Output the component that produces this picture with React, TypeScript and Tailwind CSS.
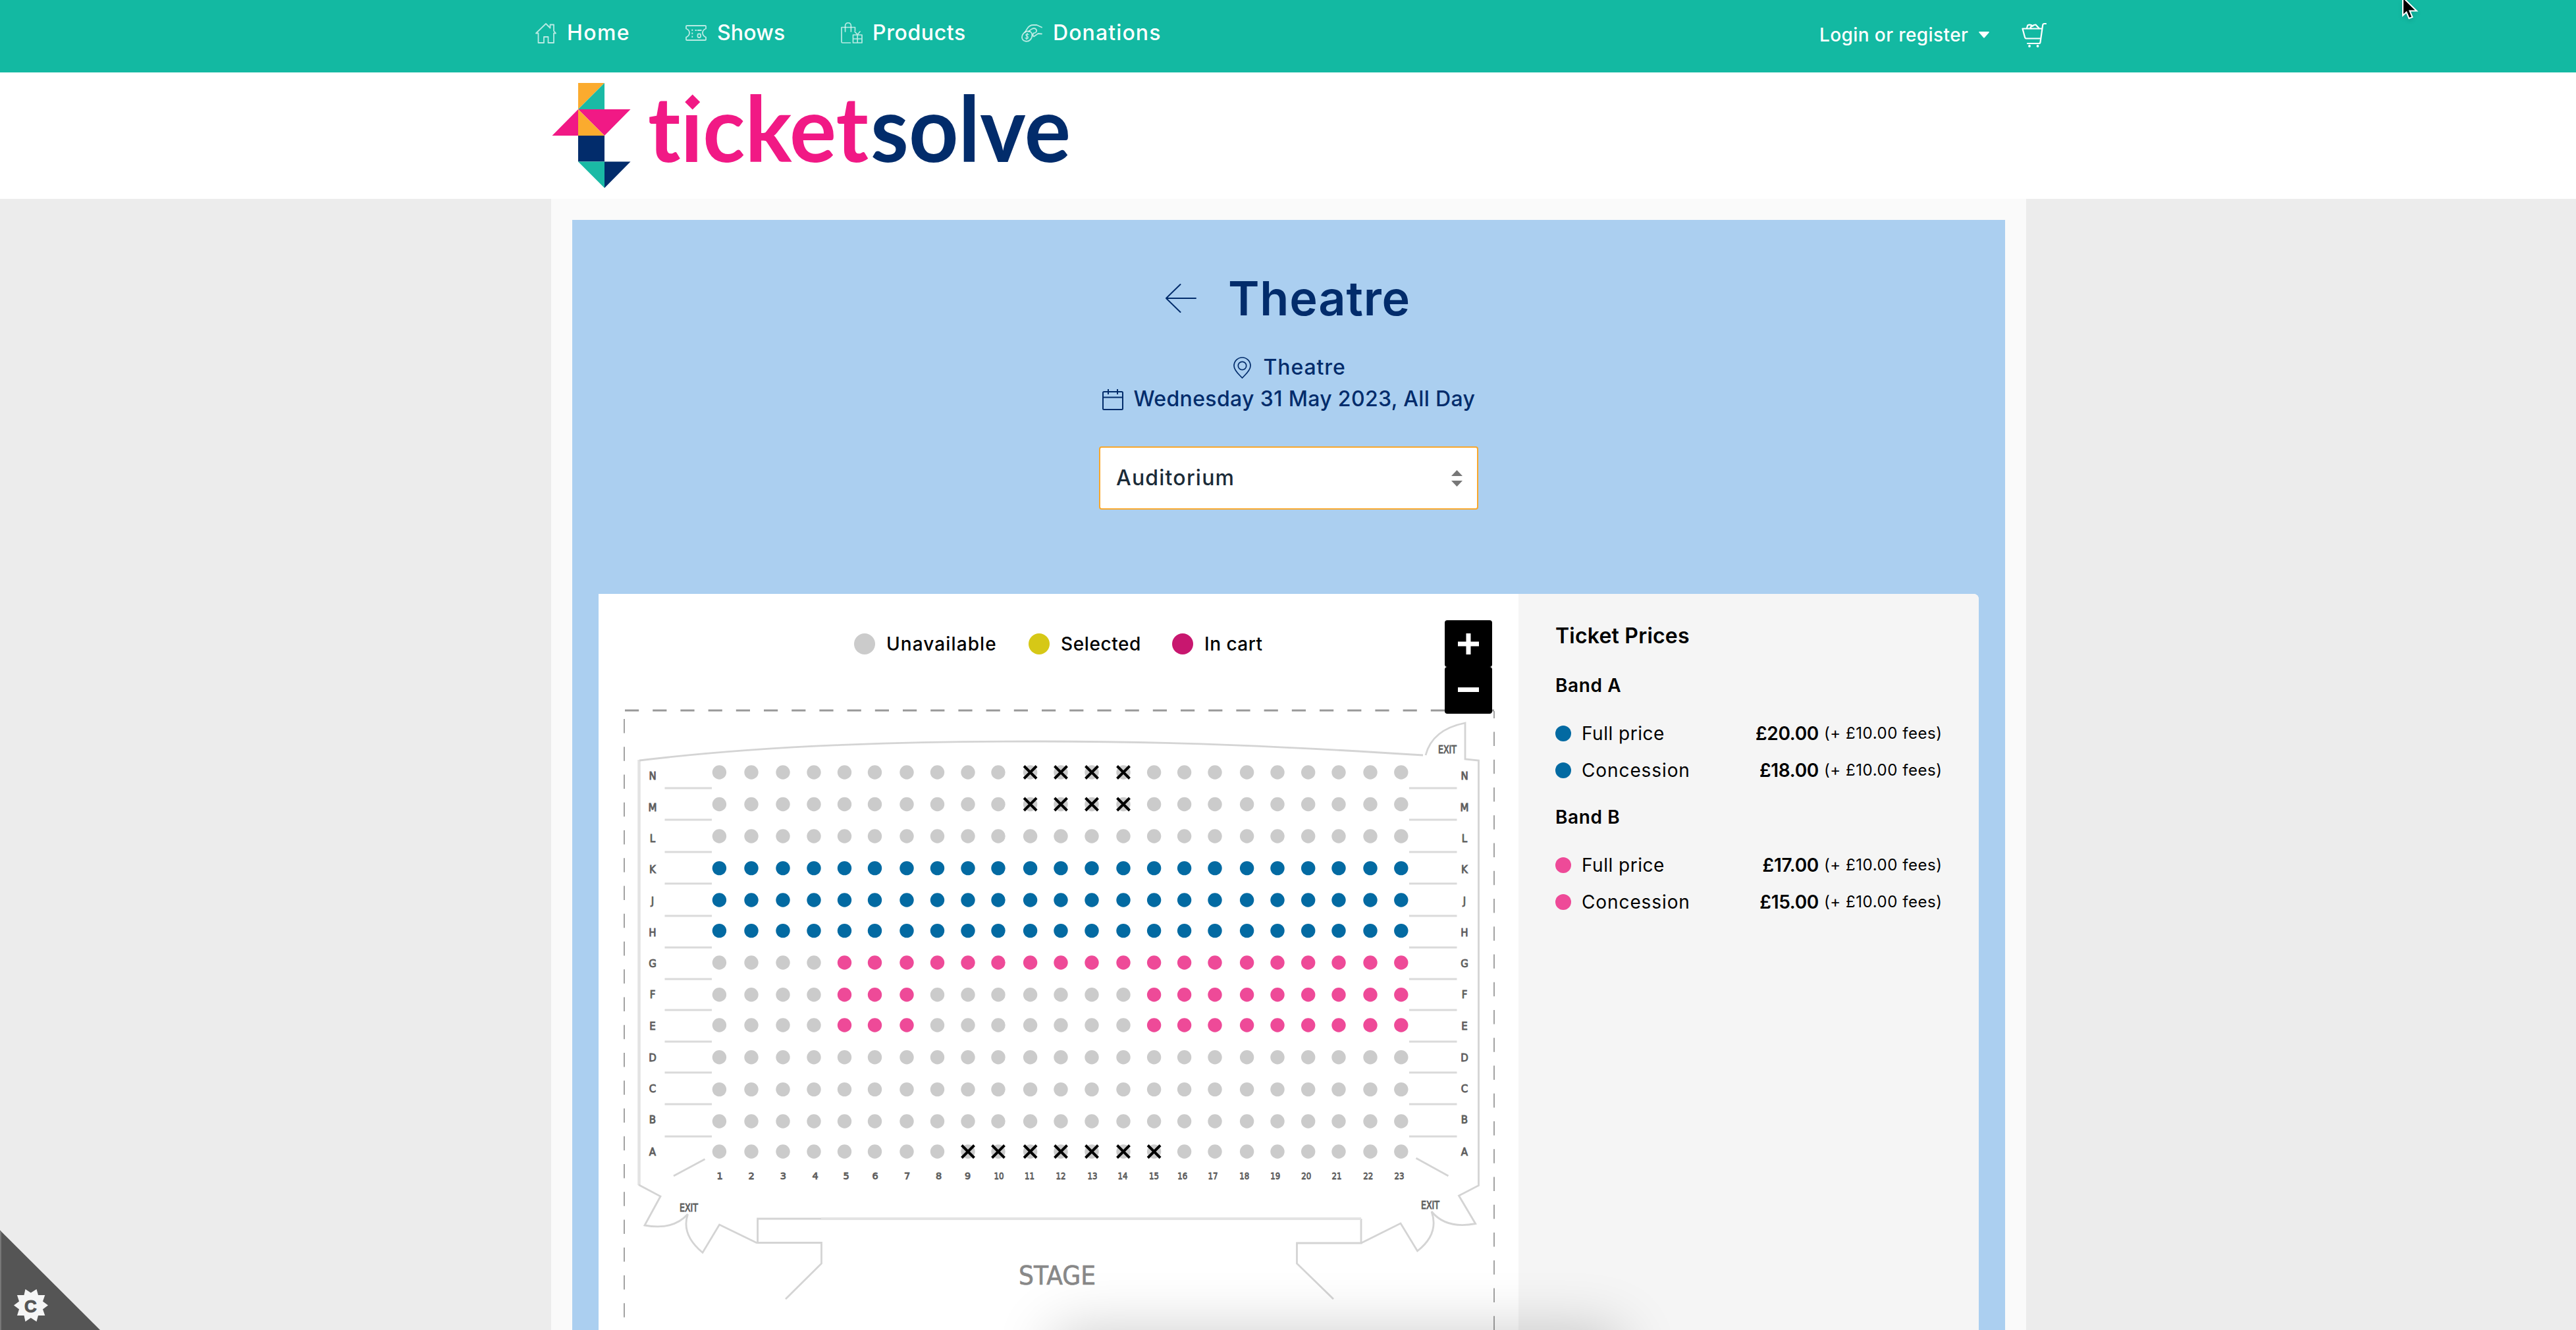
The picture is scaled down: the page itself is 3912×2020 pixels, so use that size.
import type { ReactNode } from "react";

type SeatType = "unavailable" | "bandA" | "bandB" | "blocked";

type Price = {
    label: string;
    price: string;
    tracking: string;
};

type Band = {
    name: string;
    dot: string;
    prices: Price[];
};

const bands: Band[] = [
    {
        name: "Band A",
        dot: "bg-[#036aa2]",
        prices: [
            { label: "Full price", price: "£20.00", tracking: "tracking-[0.5px]" },
            { label: "Concession", price: "£18.00", tracking: "tracking-[0.9px]" },
        ],
    },
    {
        name: "Band B",
        dot: "bg-[#ee4a98]",
        prices: [
            { label: "Full price", price: "£17.00", tracking: "tracking-[0.5px]" },
            { label: "Concession", price: "£15.00", tracking: "tracking-[0.9px]" },
        ],
    },
];

const legend = [
    { label: "Unavailable", dot: "bg-[#cbcbcb]", text: "w-[167px] tracking-[1.1px]" },
    { label: "Selected", dot: "bg-[#d6c816]", text: "w-[120px] tracking-[0.6px]" },
    { label: "In cart", dot: "bg-[#c8176f]", text: "w-[89px] tracking-[0.5px]" },
];

// seat centres on the plan
const columns = [1092.4, 1141, 1189, 1236, 1282.5, 1328.5, 1377, 1423.5, 1470, 1516, 1564.6, 1611, 1658, 1706, 1752.6, 1798.6, 1845, 1893.6, 1940, 1986.7, 2033, 2081, 2127.8];
const columnLabels = [1093, 1141, 1189.4, 1238, 1285, 1329, 1377.5, 1425.5, 1469.6, 1517, 1563.6, 1611, 1659, 1705, 1752.6, 1795.7, 1842, 1889.8, 1936.8, 1983.8, 2030, 2077.8, 2124.9];
const rows = [
    { name: "N", y: 1173, label: 1184, seats: "..........xxxx........." },
    { name: "M", y: 1221.5, label: 1232, seats: "..........xxxx........." },
    { name: "L", y: 1270, label: 1279, seats: "......................." },
    { name: "K", y: 1318.6, label: 1326, seats: "aaaaaaaaaaaaaaaaaaaaaaa" },
    { name: "J", y: 1367, label: 1374, seats: "aaaaaaaaaaaaaaaaaaaaaaa" },
    { name: "H", y: 1413.6, label: 1422, seats: "aaaaaaaaaaaaaaaaaaaaaaa" },
    { name: "G", y: 1462, label: 1469, seats: "....bbbbbbbbbbbbbbbbbbb" },
    { name: "F", y: 1510.7, label: 1516, seats: "....bbb.......bbbbbbbbb" },
    { name: "E", y: 1557, label: 1564, seats: "....bbb.......bbbbbbbbb" },
    { name: "D", y: 1605.7, label: 1611.6, seats: "......................." },
    { name: "C", y: 1654.6, label: 1659, seats: "......................." },
    { name: "B", y: 1703, label: 1706, seats: "......................." },
    { name: "A", y: 1749, label: 1754.5, seats: "........xxxxxxx........" },
];
const steps = [1197, 1245, 1294, 1342, 1391, 1439, 1487, 1534, 1582, 1629, 1677, 1726];

const seatTypes: Record<string, SeatType> = { ".": "unavailable", a: "bandA", b: "bandB", x: "blocked" };
const seatFill: Record<SeatType, string> = {
    unavailable: "#cbcbcb",
    bandA: "#036aa2",
    bandB: "#ee4a98",
    blocked: "#cbcbcb",
};

function HomeIcon() {
    return (
        <svg width="32" height="31" viewBox="0 0 32 31" fill="none" stroke="currentColor" strokeWidth="1.8" strokeLinejoin="round">
            <path d="M4.5 15.5H1L16 1l6.500 6.500V2.500H28V12l3 3.500h-3V30h-8.500v-9H13v9H4.500z" />
        </svg>
    );
}

function ShowsIcon() {
    return (
        <svg width="32" height="24" viewBox="0 0 32 24" fill="none" stroke="currentColor" strokeWidth="1.8" strokeLinejoin="round">
            <path d="M2 1H30Q31 1 31 2V5.500Q26 7.500 26 12T31 18.500V22Q31 23 30 23H2Q1 23 1 22V18.500Q6 16.500 6 12T1 5.500V2Q1 1 2 1Z" />
            <path d="M10.300 6.500v13" strokeDasharray="2.500 2.500" />
            <path d="M14.500 8H17M18 8h6.500" />
            <rect x="18.500" y="13.500" width="4.500" height="5.500" rx="1.500" />
        </svg>
    );
}

function ProductsIcon() {
    return (
        <svg width="33" height="32" viewBox="0 0 33 32" fill="none" stroke="currentColor" strokeWidth="1.700" strokeLinejoin="round" strokeLinecap="round">
            <path d="M6.600 14V5a4.400 4.400 0 0 1 8.800 0v9" />
            <path d="M14.500 31H2.500Q1 31 1 29.500V7.500h20.500V12.500" />
            <path d="M18.500 19H32V31H18.500zM18.500 25H32M25.200 19v12M21 14l4.200 4.500L29 14" />
        </svg>
    );
}

function DonationsIcon() {
    return (
        <svg width="32" height="27" viewBox="0 0 32 27" fill="none" stroke="currentColor" strokeWidth="1.800" strokeLinejoin="round" strokeLinecap="round">
            <path d="M12.500 10.500C18 13 17 20 13.500 23.500 10 27 3.500 26.500 1.500 22 -.500 16.500 5 9 12.500 10.500z" />
            <path d="M5.500 12L9 6.500Q12.500 1 18 1h5.500L31 4.500M31 14.500l-5.500-.500-6.500 4.500q-2.500-1.500-.500-5 5.500-1 4.500-5-2-4-7-1.500-3 1.500-4.500 4" />
            <path d="M11 15.500q-3.500-2-4 .500 0 1.500 2 2.200 2 1 1 2.800-1.500 1.500-4-.300M9.300 13.700l-1.500 9.200" strokeWidth="1.400" />
        </svg>
    );
}

function CartIcon() {
    return (
        <svg width="38" height="38" viewBox="0 0 38 38" fill="none" stroke="currentColor" strokeWidth="2.200" strokeLinejoin="round" strokeLinecap="round">
            <path d="M37 2h-2.500q-2 0-2.300 2L28.500 30q-.300 2-2 2H9" />
            <path d="M31 9.500H1.500L5 22.500q.500 2 2.500 2H28.500" />
            <path d="M8 9l1.200-4.500Q13 2.500 17 5.500M14.500 9q-2-1 0-2.500L19 4l2.500-.500L26.500 9" />
            <circle cx="12" cy="36" r="1.900" fill="currentColor" stroke="none" />
            <circle cx="24.500" cy="36" r="1.900" fill="currentColor" stroke="none" />
        </svg>
    );
}

function Logo() {
    return (
        <svg className="overflow-visible [font-variant-ligatures:none]" width="840" height="192" viewBox="838 110 840 192" role="img" aria-label="ticketsolve">
            <path d="M878 126h40l-40 40z" fill="#fbab2e" />
            <path d="M918 126v40h-40z" fill="#1abaa5" />
            <path d="M878 166h79.500L918 206zM878 166v40h-39.500z" fill="#f11985" />
            <path d="M878 166l40 40h-40z" fill="#fbab2e" />
            <path d="M878 206h40v39.500h-40zM918 245.500h39.500L918 285.500z" fill="#022c6b" />
            <path d="M878 245.500h40v40z" fill="#1abaa5" />
            <g fontFamily="Lato, sans-serif" fontWeight="700" fontSize="138">
                <text x="984" y="246" fill="#f11985" textLength="335" lengthAdjust="spacingAndGlyphs">ticket</text>
                <text x="1322" y="246" fill="#022c6b" textLength="304" lengthAdjust="spacingAndGlyphs">solve</text>
            </g>
            {/* diamond over the i */}
            <path d="M1039 136h25v35h-25z" fill="#fff" />
            <path d="M1051.700 143.500l11.500 11.500-11.500 11.500-11.500-11.500z" fill="#f11985" />
        </svg>
    );
}

function NavItem({ icon, label, className }: { icon: ReactNode; label: string; className: string }) {
    return (
        <a className="flex items-center gap-4">
            <span className="w-8 shrink-0 text-white/70">{icon}</span>
            <span className={`whitespace-nowrap ${className}`}>{label}</span>
        </a>
    );
}

function Seat({ x, y, type }: { x: number; y: number; type: SeatType }) {
    return (
        <g transform={`translate(${x} ${y})`}>
            <circle r="10.700" fill={seatFill[type]} />
            {type === "blocked" && <path d="M-9.500-9.500l19 19M9.500-9.500l-19 19" stroke="#000" strokeWidth="4" />}
        </g>
    );
}

function SeatPlan() {
    return (
        <svg className="block" width="1397" height="956" viewBox="909 1064 1397 956" fill="none">
            <g stroke="#999">
                <path d="M949 1079H2269" strokeWidth="3" strokeDasharray="21.200 21" />
                <path d="M948 1092V2002" strokeWidth="1.800" strokeDasharray="21.500 20.750" />
                <path d="M2269 1080V1091M2269 1111.500V2020" strokeWidth="1.800" strokeDasharray="21.500 20.750" />
            </g>

            {/* walls and doors */}
            <path d="M970.500 1154V1800" stroke="#e3e3e3" strokeWidth="4.500" />
            <g stroke="#d4d4d4" strokeWidth="2.800">
                <path d="M971 1155C1180 1130 1400 1126 1580 1126C1780 1126 1960 1134 2161 1147" />
                <path d="M2165 1147Q2175 1108 2225 1098V1153L2245.500 1155V1800.500L2215.500 1816L2240.700 1858.500Q2196 1867 2174 1840Q2186 1874 2152.500 1900L2127 1858L2067 1888" />
                <path d="M970 1799.500L1003 1817L979 1861Q1022 1869 1044.500 1844Q1034 1875 1067 1902.500L1092.500 1860L1150 1888" />
                <path d="M1150.600 1888V1851H1248M1150 1887.500H1247.500V1919L1193 1973M2067 1851V1888H1969.500V1919L2025 1973" />
                <path d="M1023 1786L1070.500 1760.500M2150.500 1759L2199.500 1786" />
            </g>
            <path d="M1247 1851H2067" stroke="#e3e3e3" strokeWidth="4" />

            {steps.map((y) => (
                <path key={y} d={`M1009.500 ${y}H1081M2140 ${y}H2212.500`} stroke="#dadada" strokeWidth="3.200" />
            ))}

            <g fontFamily="'DejaVu Sans', sans-serif" fontSize="15" fill="#5f5f5f" stroke="#5f5f5f" strokeWidth="0.900" textAnchor="middle">
                {rows.map((row) => (
                    <g key={row.name}>
                        <text x="991" y={row.label}>{row.name}</text>
                        <text x="2224" y={row.label}>{row.name}</text>
                    </g>
                ))}
                {columnLabels.map((x, i) => (
                    <text key={x} x={x} y="1790.500" fontSize="14.500" textLength={i > 8 ? 15 : undefined} lengthAdjust="spacingAndGlyphs">{i + 1}</text>
                ))}
                <text x="2198" y="1143.500" textLength="28" lengthAdjust="spacingAndGlyphs">EXIT</text>
                <text x="1046" y="1839.500" textLength="28" lengthAdjust="spacingAndGlyphs">EXIT</text>
                <text x="2172" y="1835.500" textLength="28" lengthAdjust="spacingAndGlyphs">EXIT</text>
            </g>
            <text x="1547" y="1951" fontFamily="'DejaVu Sans', sans-serif" fontSize="39" fill="#888" stroke="#888" strokeWidth="0.700" textLength="117" lengthAdjust="spacingAndGlyphs">STAGE</text>

            {rows.map((row) =>
                columns.map((x, i) => <Seat key={row.name + i} x={x} y={row.y} type={seatTypes[row.seats[i]]} />)
            )}
        </svg>
    );
}

function ZoomControls() {
    return (
        <div className="absolute top-10 right-10 flex flex-col text-white">
            <button type="button" aria-label="Zoom in" className="flex h-[71px] w-[72px] items-center justify-center rounded-[4px] bg-black">
                <svg width="32" height="32" viewBox="0 0 32 32" stroke="currentColor" strokeWidth="7"><path d="M16 0v32M0 16h32" /></svg>
            </button>
            <button type="button" aria-label="Zoom out" className="flex h-[71px] w-[72px] items-center justify-center rounded-[4px] bg-black">
                <svg width="32" height="32" viewBox="0 0 32 32" stroke="currentColor" strokeWidth="7"><path d="M0 14.500h32" /></svg>
            </button>
        </div>
    );
}

function PriceRow({ price, dot }: { price: Price; dot: string }) {
    return (
        <div className="flex h-14 items-center text-[28px]">
            <span className={`mr-4 size-6 rounded-full ${dot}`} />
            <span className={price.tracking}>{price.label}</span>
            <span className="ml-auto font-semibold tracking-[-0.3px]">{price.price}</span>
            <span className="ml-2 w-[179px] whitespace-nowrap text-[24px] tracking-[0.55px]">(+ £10.00 fees)</span>
        </div>
    );
}

export default function App() {
    return (
        <div className="relative flex h-[2020px] w-[3912px] flex-col overflow-hidden bg-[#ececec] font-['Inter',sans-serif] text-black">
            <header className="flex h-[110px] shrink-0 items-start bg-[#13b9a2] pl-[813px] text-white">
                <nav className="flex h-[100px] items-center gap-[84px] text-[32px] font-medium">
                    <NavItem icon={<HomeIcon />} label="Home" className="w-[96px] tracking-[1.4px]" />
                    <NavItem icon={<ShowsIcon />} label="Shows" className="w-[104px] tracking-[0.2px]" />
                    <NavItem icon={<ProductsIcon />} label="Products" className="w-[142px] tracking-[0.6px]" />
                    <NavItem icon={<DonationsIcon />} label="Donations" className="w-[163px] tracking-[1.1px]" />
                </nav>
                <div className="ml-[1001px] flex h-[106px] items-center">
                    <span className="w-[225px] text-[28px] font-medium tracking-[0.4px] whitespace-nowrap">Login or register</span>
                    <svg className="ml-[17px]" width="16" height="10" viewBox="0 0 16 10" fill="currentColor"><path d="M1 0h14q1.500.500.500 1.500L9 9q-1 1-2 0L.500 1.500Q-.500.500 1 0z" /></svg>
                    <span className="ml-[49px]"><CartIcon /></span>
                </div>
            </header>

            <div className="flex h-48 shrink-0 items-center bg-white pl-[838px]">
                <Logo />
            </div>

            <main className="mx-[837px] w-[2240px] grow bg-[#fafafa] px-8 pt-8">
                <section className="flex h-[1686px] flex-col items-center bg-[#abcff0] px-10 pt-[79px] text-[#022c6b]">
                    <div className="flex h-20 items-center gap-12">
                        <svg width="47" height="44" viewBox="0 0 47 44" fill="none" stroke="currentColor" strokeWidth="2" strokeLinecap="round"><path d="M46 22H1M22.500 1L1 22l21.500 21" /></svg>
                        <h1 className="w-[279px] text-[72px] font-semibold tracking-[0.8px] whitespace-nowrap">Theatre</h1>
                    </div>
                    <div className="mt-[41px] flex h-12 items-center gap-[19px] text-[32px] font-medium">
                        <svg width="27" height="33" viewBox="0 0 27 33" fill="none" stroke="currentColor" strokeWidth="1.700">
                            <path d="M13.500 32C9 27 1 21 1 13.500a12.500 12.500 0 0 1 25 0C26 21 18 27 13.500 32z" />
                            <circle cx="13.500" cy="13.500" r="6.200" />
                        </svg>
                        <span className="w-[123px] tracking-[0.9px]">Theatre</span>
                    </div>
                    <div className="flex h-12 items-center gap-4 text-[32px] font-medium">
                        <svg width="32" height="33" viewBox="0 0 32 33" fill="none" stroke="currentColor" strokeWidth="2">
                            <rect x="1" y="5" width="30" height="27" rx="1.500" />
                            <path d="M1 13.500h30M9 1v8M23 1v8" />
                        </svg>
                        <span className="w-[519px] tracking-[0.35px] whitespace-nowrap">Wednesday 31 May 2023, All Day</span>
                    </div>
                    <button type="button" className="mt-12 flex h-24 w-[576px] shrink-0 items-center justify-between rounded-[4px] border-2 border-[#f9a72b] bg-white pr-[22px] pl-[24px] text-[32px] font-medium text-[#1b2b38]">
                        <span className="tracking-[1.2px]">Auditorium</span>
                        <svg width="17" height="25" viewBox="0 0 17 25" fill="#777"><path d="M8.500 0L17 9H0zM8.500 25L17 16H0z" /></svg>
                    </button>

                    <div className="mt-32 flex h-[1118px] w-[2096px] overflow-hidden rounded-tr-lg bg-white text-black">
                        <div className="relative w-[1397px] shrink-0 pt-[60px]">
                            <div className="mb-[70px] ml-[388px] flex h-8 items-center gap-[49px] text-[28px] font-medium">
                                {legend.map((item) => (
                                    <div key={item.label} className="flex items-center gap-[17px]">
                                        <span className={`size-8 rounded-full ${item.dot}`} />
                                        <span className={`whitespace-nowrap ${item.text}`}>{item.label}</span>
                                    </div>
                                ))}
                            </div>
                            <SeatPlan />
                            <ZoomControls />
                        </div>

                        <aside className="grow bg-[#f5f5f5] px-[56px] pt-10">
                            <h2 className="mb-7 h-12 text-[32px] leading-[48px] font-semibold tracking-[0.2px]">Ticket Prices</h2>
                            {bands.map((band) => (
                                <div key={band.name} className="mb-5">
                                    <h3 className="mb-[22px] h-[46px] text-[28px] leading-[46px] font-semibold tracking-[0.6px]">{band.name}</h3>
                                    {band.prices.map((price) => (
                                        <PriceRow key={price.label} price={price} dot={band.dot} />
                                    ))}
                                </div>
                            ))}
                        </aside>
                    </div>
                </section>
            </main>

            {/* soft shadow of the bar sitting just under the fold */}
            <div className="absolute top-[2020px] left-[1600px] h-40 w-[860px] shadow-[0_0_90px_rgba(0,0,0,0.2)]" />

            {/* cookie settings corner */}
            <svg className="absolute bottom-0 left-0" width="152" height="152" viewBox="0 1868 152 152">
                <path d="M0 1868.500L152 2020H0z" fill="#555" />
                <path d="M0 1868.500L2 1870.500V2020H0z" fill="#777" />
                <path d="M73 1982.500L65 1988.400 68.300 1998 58 1998 55.500 2007.300 46.800 2001.500 38.500 2007.300 36.500 1998 26 1998 29 1988.400 21 1982.500 29 1976.600 26 1967 36.500 1967 38.500 1958 46.800 1963.500 55.500 1958 58 1967 68.300 1967 65 1976.600z" fill="#f5f5f5" />
                <text x="46.500" y="1992.500" textAnchor="middle" fontFamily="'Liberation Sans', sans-serif" fontWeight="700" fontSize="26" fill="#555" stroke="#555" strokeWidth="1">C</text>
            </svg>

            {/* pointer */}
            <svg className="absolute top-0 left-[3647px] drop-shadow-md" width="28" height="32" viewBox="0 0 28 32">
                <path d="M2-4V23.500L7.500 18.500 11.500 28 16.500 26 12.500 16.500H23z" fill="#000" stroke="#fff" strokeWidth="2" />
            </svg>
        </div>
    );
}
